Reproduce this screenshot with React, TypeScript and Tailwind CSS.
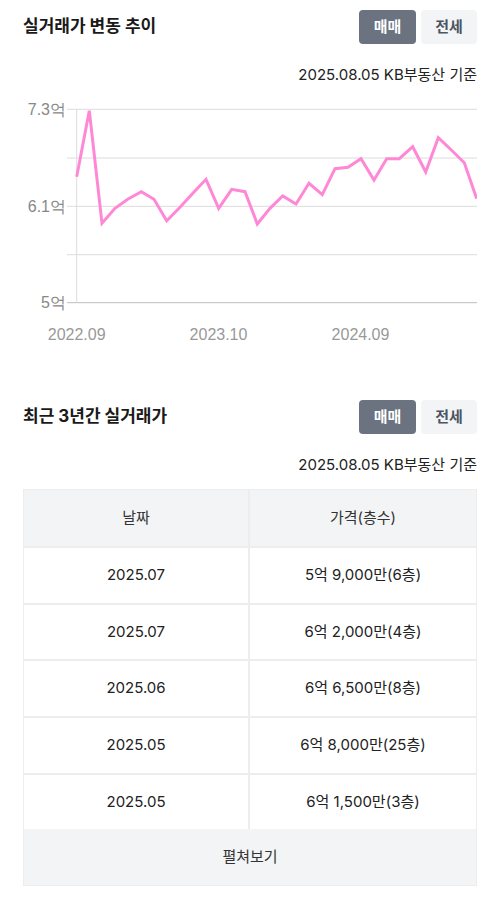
const font = { fontFamily: 'Inter, "Noto Sans CJK KR", sans-serif' }

const points: [number, number][] = [
  [76.7, 176.7], [89.3, 110.7], [102, 223.3], [115, 208.3], [127.7, 199.3],
  [141.3, 191.7], [154, 199.3], [166.7, 220.7], [180, 207.3], [193.3, 192.7],
  [206, 179.3], [218.7, 208.3], [231.7, 189.3], [245, 191.7], [257.3, 224],
  [270, 208.3], [282.7, 196], [296, 204], [309, 183.3], [322.3, 194.7],
  [335, 168.7], [348, 167.3], [361, 158.7], [374, 180], [386.7, 158.7],
  [399.3, 158.7], [412.7, 146.7], [425.7, 172], [438.3, 137.7], [451.3, 150],
  [464.3, 162.7], [476.7, 198.7],
]

const rows = [
  { date: "2025.07", price: "5억 9,000만(6층)" },
  { date: "2025.07", price: "6억 2,000만(4층)" },
  { date: "2025.06", price: "6억 6,500만(8층)" },
  { date: "2025.05", price: "6억 8,000만(25층)" },
  { date: "2025.05", price: "6억 1,500만(3층)" },
]

function Header({ title }: { title: string }) {
  return (
    <div className="flex items-center justify-between h-[34px]">
      <h2 className="text-[17px] font-bold text-[#1a1a1a]">{title}</h2>
      <div className="flex gap-[5px]">
        <button className="w-[57px] h-[34px] rounded-[4px] bg-[#6b7280] text-white text-[15px] font-semibold">
          매매
        </button>
        <button className="w-[56px] h-[34px] rounded-[4px] bg-[#f3f4f6] text-[#4b5563] text-[15px] font-semibold">
          전세
        </button>
      </div>
    </div>
  )
}

function Basis() {
  return (
    <p className="text-right text-[15px] leading-[20px] text-[#222] mt-[21px]">
      2025.08.05 KB부동산 기준
    </p>
  )
}

function PriceChart() {
  const grid = [109.3, 158, 206.3, 254.7]
  const labelFont = '"Liberation Sans", Arial, sans-serif'
  return (
    <svg width="454" height="265" viewBox="23 85 454 265" className="block">
      {grid.map((y) => (
        <line key={y} x1="67" x2="477" y1={y} y2={y} stroke="#dcdcdc" strokeWidth="1" />
      ))}
      <line x1="67" x2="477" y1="302.7" y2="302.7" stroke="#bdbdbd" strokeWidth="1" />
      <line x1="76.7" x2="76.7" y1="109.3" y2="302.7" stroke="#dcdcdc" strokeWidth="1" />
      <g fontFamily={labelFont} fontSize="16" fill="#888" textAnchor="end">
        <text x="66" y="115">7.3억</text>
        <text x="66" y="212">6.1억</text>
        <text x="66" y="308">5억</text>
      </g>
      <g fontFamily={labelFont} fontSize="16" fill="#999" textAnchor="middle">
        <text x="76.7" y="340">2022.09</text>
        <text x="218.5" y="340">2023.10</text>
        <text x="360.5" y="340">2024.09</text>
      </g>
      <polyline
        points={points.map((p) => p.join(",")).join(" ")}
        fill="none"
        stroke="#ff88d6"
        strokeWidth="3"
        strokeLinejoin="miter"
      />
    </svg>
  )
}

export default function App() {
  return (
    <div className="w-[500px] bg-white px-[23px] pt-[10px]" style={font}>
      <section>
        <Header title="실거래가 변동 추이" />
        <Basis />
        <PriceChart />
      </section>

      <section className="mt-[50px]">
        <Header title="최근 3년간 실거래가" />
        <Basis />
        <div className="mt-[14px] border border-[#ededed] text-[15px] text-[#222]">
          <div className="grid grid-cols-2 bg-[#f3f4f6] h-[56px]">
            <div className="flex items-center justify-center border-r-2 border-[#ededed] text-[#333]">날짜</div>
            <div className="flex items-center justify-center text-[#333]">가격(층수)</div>
          </div>
          {rows.map((r, i) => (
            <div key={i} className="grid grid-cols-2 h-[56.7px] border-t-2 border-[#ededed]">
              <div className="flex items-center justify-center border-r-2 border-[#ededed]">{r.date}</div>
              <div className="flex items-center justify-center">{r.price}</div>
            </div>
          ))}
          <div className="flex items-center justify-center h-[56px] bg-[#f3f4f6] text-[#333]">
            펼쳐보기
          </div>
        </div>
      </section>
    </div>
  )
}
